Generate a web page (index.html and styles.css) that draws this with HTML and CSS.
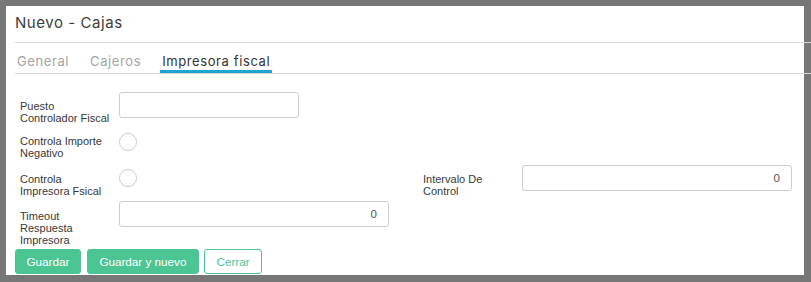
FILE: index.html
```html
<!DOCTYPE html>
<html lang="es">
<head>
<meta charset="utf-8">
<title>Nuevo - Cajas</title>
<link rel="stylesheet" href="styles.css">
</head>
<body>
<div class="modal">
  <div class="header"><h1 class="title">Nuevo - Cajas</h1></div>
  <div class="tabs">
    <span class="tab">General</span>
    <span class="tab">Cajeros</span>
    <span class="tab active">Impresora fiscal</span>
  </div>
  <div class="form">
    <div class="row row1">
      <div class="field">
        <label class="label">Puesto<br>Controlador Fiscal</label>
        <input class="input short" type="text" value="">
      </div>
    </div>
    <div class="row row2">
      <div class="field">
        <label class="label">Controla Importe<br>Negativo</label>
        <span class="check check-a"></span>
      </div>
    </div>
    <div class="row row3">
      <div class="field">
        <label class="label">Controla<br>Impresora Fsical</label>
        <span class="check check-b"></span>
      </div>
      <div class="field">
        <label class="label">Intervalo De<br>Control</label>
        <input class="input num" type="text" value="0">
      </div>
    </div>
    <div class="row row4">
      <div class="field">
        <label class="label">Timeout<br>Respuesta<br>Impresora</label>
        <input class="input num" type="text" value="0">
      </div>
    </div>
  </div>
  <div class="actions">
    <button class="btn primary">Guardar</button>
    <button class="btn primary wide">Guardar y nuevo</button>
    <button class="btn outline">Cerrar</button>
  </div>
</div>
</body>
</html>
```

FILE: styles.css
```css
* { box-sizing: border-box; }
html, body { margin: 0; padding: 0; }
body {
  background: #777777;
  width: 811px;
  height: 282px;
  overflow: hidden;
  padding: 6px 7px 7px 6px;
}
.modal {
  background: #ffffff;
  height: 269px;
  width: 798px;
}
.header {
  margin: 0 -7px 0 9px;
  height: 37px;
  border-bottom: 1px solid #d6d6d6;
  padding-top: 7px;
}
.title {
  margin: 0;
  font-family: Inter, "Open Sans", sans-serif;
  font-weight: 400;
  font-size: 15px;
  line-height: 20px;
  letter-spacing: 0.55px;
  color: #3d3d3d;
}
.tabs {
  display: flex;
  gap: 17px;
  margin: 0 -7px 0 9px;
  border-bottom: 1px solid #d6d6d6;
  height: 31px;
}
.tab {
  font-family: Inter, "Open Sans", sans-serif;
  font-size: 13px;
  line-height: 16px;
  letter-spacing: 0.6px;
  color: #a4a4a4;
  padding: 10px 2px 1px;
  border-bottom: 3px solid transparent;
  height: 30px;
}
.tab.active {
  color: #333333;
  border-bottom-color: #1ba7d1;
}
.form {
  padding: 18px 0 0 9px;
  font-family: "Liberation Sans", Arial, sans-serif;
}
.row { display: flex; }
.row1 { margin-bottom: 3px; }
.row2 { margin-bottom: 6px; }
.row3 { margin-bottom: 4px; }
.row4 { margin-bottom: 3px; }
.field {
  display: flex;
  align-items: flex-start;
  flex: 0 0 403px;
  width: 403px;
}
.label {
  flex: 0 0 104px;
  width: 104px;
  padding: 8px 0 0 5px;
  font-size: 11px;
  line-height: 12px;
  color: #383838;
}
.row4 .label { padding-top: 9px; }
.input {
  flex: 0 0 270px;
  width: 270px;
  height: 26px;
  border: 1px solid #cccccc;
  border-radius: 3px;
  font-family: "Liberation Sans", Arial, sans-serif;
  font-size: 11.5px;
  color: #555555;
  padding: 0 11px;
  outline: none;
  margin: 0;
}
.input.short { flex-basis: 180px; width: 180px; }
.input.num { text-align: right; }
.check {
  display: block;
  flex: 0 0 18px;
  width: 18px;
  height: 18px;
  border: 1px solid #cccccc;
  border-radius: 50%;
  background: #fff;
}
.check-a { margin-top: 6px; }
.check-b { margin-top: 3.5px; }
.actions {
  display: flex;
  gap: 6px;
  padding-left: 9px;
}
.btn {
  font-family: "Liberation Sans", Arial, sans-serif;
  font-size: 11.7px;
  height: 25px;
  padding: 0 10.5px;
  border-radius: 3px;
  border: 1px solid #4cc594;
  cursor: pointer;
  margin: 0;
}
.btn.wide { padding: 0 11.5px; }
.btn.primary {
  background: #4cc594;
  color: #ffffff;
}
.btn.outline {
  background: #ffffff;
  color: #4cc594;
  padding: 0 11.5px;
  margin-left: -1px;
}
```
